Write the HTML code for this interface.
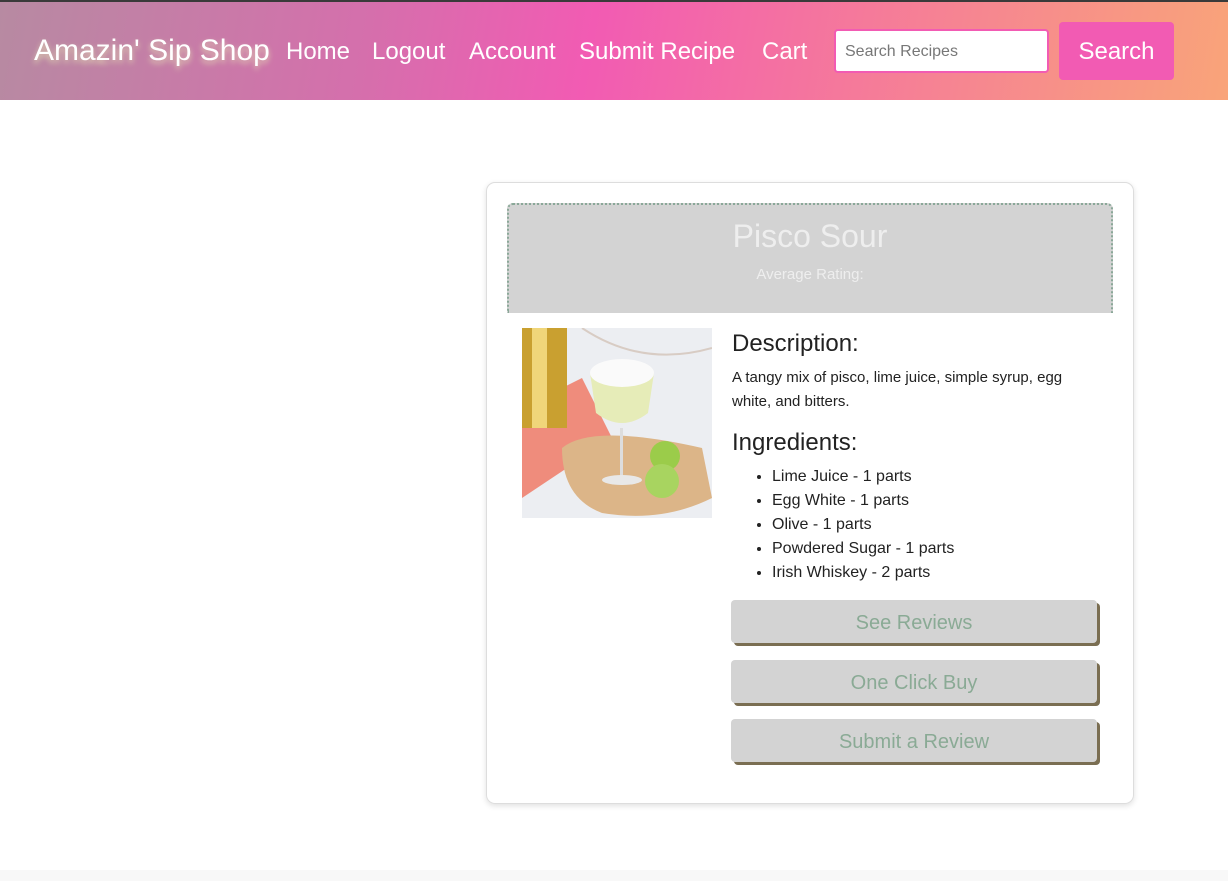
<!DOCTYPE html>
<html><head><meta charset="utf-8"><style>
*{box-sizing:border-box;margin:0;padding:0}
body{width:1228px;height:881px;overflow:hidden;background:#fff;font-family:"Liberation Sans",Arial,sans-serif;position:relative}
.hdr{position:absolute;left:0;top:0;width:1228px;height:100px;border-top:2px solid #3a3a3a;background:linear-gradient(100deg,#b78aa2 0%,#d56fac 30%,#f25bb3 48%,#f57a9a 70%,#f9a479 100%)}
.logo{position:absolute;left:34px;top:34px;font-size:30px;color:#fff;text-shadow:0 3px 6px rgba(230,225,180,.9)}
.nav a{position:absolute;top:38px;font-size:24px;color:#fff;text-decoration:none}
.srch{position:absolute;left:834px;top:29px;width:215px;height:44px;border:2px solid #f25bb3;border-radius:4px;background:#fff;font-size:16px;color:#777;padding:12px 9px}
.sbtn{position:absolute;left:1059px;top:22px;width:115px;height:58px;background:#f25bb3;border-radius:4px;color:#fff;font-size:24px;text-align:center;line-height:60px}
.card{position:absolute;left:486px;top:182px;width:648px;height:622px;border:1px solid #ddd;border-radius:9px;box-shadow:0 2px 6px rgba(0,0,0,.12)}
.ch{position:absolute;left:507px;top:203px;width:606px;height:110px;background:#d3d3d3;border:2px dotted #8aa898;border-bottom:none;border-radius:6px 6px 0 0;text-align:center;color:#eee}
.ch h1{font-weight:normal;font-size:32px;margin-top:13px}
.ch p{font-size:15px;margin-top:11px}
.img{position:absolute;left:522px;top:328px;width:190px;height:190px}
.txt{position:absolute;left:732px;top:328px;width:370px;color:#222}
.txt h2{font-weight:normal;font-size:24px;line-height:28px}
.txt p{font-size:15px;line-height:24px;margin-top:8px}
ul{margin-left:40px;font-size:16px;line-height:24px;margin-top:8px}
.btn{position:absolute;left:731px;width:366px;height:43px;background:#d3d3d3;border-radius:4px;box-shadow:3px 3px 0 #7a6e52;color:#8aaa95;font-size:20px;text-align:center;line-height:46px}
.foot{position:absolute;left:0;top:870px;width:1228px;height:11px;background:#f8f8f8}
</style></head><body>
<div class="hdr"></div>
<div class="logo">Amazin' Sip Shop</div>
<div class="nav"><a style="left:286px">Home</a><a style="left:372px">Logout</a><a style="left:469px">Account</a><a style="left:579px">Submit Recipe</a><a style="left:762px">Cart</a></div>
<div class="srch">Search Recipes</div>
<div class="sbtn">Search</div>
<div class="card"></div>
<div class="ch"><h1>Pisco Sour</h1><p>Average Rating:</p></div>
<svg class="img" viewBox="0 0 190 190">
<rect width="190" height="190" fill="#eceef2"/>
<path d="M60 0 Q120 40 190 20" stroke="#d8ccc4" fill="none" stroke-width="2"/>
<path d="M0 80 L60 50 L90 110 L0 170Z" fill="#ef8c7c"/>
<rect x="0" y="0" width="45" height="100" fill="#c9a030"/>
<rect x="10" y="0" width="15" height="100" fill="#f0d67a"/>
<path d="M40 120 Q70 95 180 120 L190 170 Q140 195 80 185 Q40 170 40 120Z" fill="#dcb588"/>
<path d="M68 45 Q100 32 132 45 L126 85 Q100 105 74 85Z" fill="#e6ecb8"/>
<ellipse cx="100" cy="45" rx="32" ry="14" fill="#fafafa"/>
<rect x="98" y="100" width="3" height="50" fill="#ddd"/>
<ellipse cx="100" cy="152" rx="20" ry="5" fill="#e8e8e8"/>
<circle cx="143" cy="128" r="15" fill="#9bcc4a"/><circle cx="140" cy="153" r="17" fill="#a8d460"/>
</svg>
<div class="txt">
<h2 style="margin-top:2px">Description:</h2>
<p>A tangy mix of pisco, lime juice, simple syrup, egg white, and bitters.</p>
<h2 style="margin-top:15px">Ingredients:</h2>
<ul><li>Lime Juice - 1 parts</li><li>Egg White - 1 parts</li><li>Olive - 1 parts</li><li>Powdered Sugar - 1 parts</li><li>Irish Whiskey - 2 parts</li></ul>
</div>
<div class="btn" style="top:600px">See Reviews</div>
<div class="btn" style="top:660px">One Click Buy</div>
<div class="btn" style="top:719px">Submit a Review</div>
<div class="foot"></div>
</body></html>
